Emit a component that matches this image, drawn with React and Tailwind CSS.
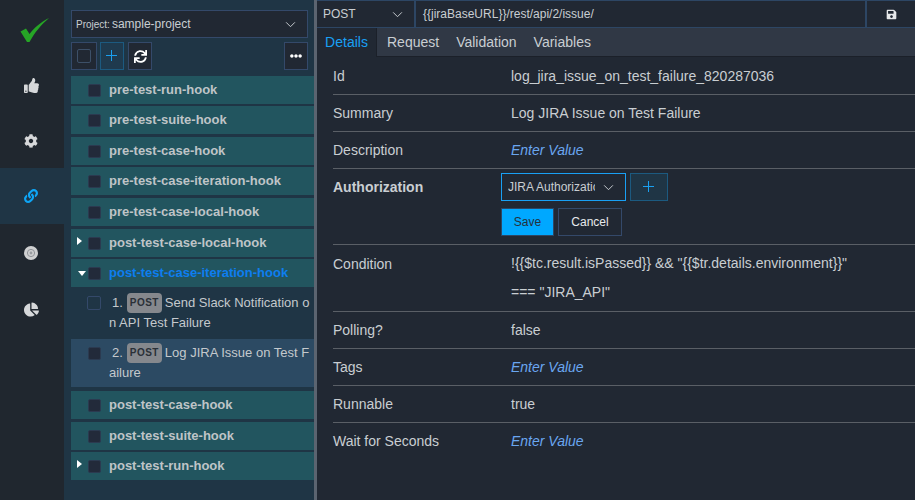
import React from "react";
import { FaThumbsUp, FaCog, FaLink, FaChartPie, FaSync, FaEllipsisH, FaSave } from "react-icons/fa";

const Chevron = ({ className }) => (
  <svg viewBox="0 0 12 8" className={className} fill="none" stroke="currentColor" strokeWidth="1.1">
    <path d="M1 1.5 L6 6.5 L11 1.5" />
  </svg>
);

const Plus = () => (
  <svg viewBox="0 0 12 12" className="w-[12px] h-[12px]" stroke="currentColor" strokeWidth="1">
    <path d="M5.5 0V11M0 5.5H11" />
  </svg>
);

const Box = ({ outline }) => (
  <span className={`block rounded-[2px] shrink-0 border ${outline ? "w-[14px] h-[14px] -ml-[1px] border-[#34496a]" : "w-[13px] h-[13px] border-[#2b3a50] bg-[#222a3a]"}`} />
);

const Caret = ({ dir }) =>
  dir === "right" ? (
    <span className="absolute left-[6px] top-[8px] w-0 h-0 border-y-[4px] border-y-transparent border-l-[5px] border-l-white" />
  ) : (
    <span className="absolute left-[7px] top-[12px] w-0 h-0 border-x-[4px] border-x-transparent border-t-[5px] border-t-white" />
  );

const Hook = ({ label, caret, active, mb = "mb-[2px]" }) => (
  <div className={`relative h-[28px] ${mb} bg-[#22555f] flex items-center pl-[17px] shrink-0`}>
    {caret && <Caret dir={caret} />}
    <Box />
    <span className={`ml-[8px] font-bold text-[13px] ${active ? "text-[#0d7ef0]" : "text-[#bfc4c7]"}`}>{label}</span>
  </div>
);

const Child = ({ n, l1, l2, selected, h, boxTop, textTop }) => (
  <div className={`flex pl-[17px] shrink-0 ${h} ${selected ? "bg-[#2c4a63]" : ""}`}>
    <span className={boxTop}><Box outline={!selected} /></span>
    <div className={`ml-[8px] text-[13px] leading-[20px] text-[#c4c9cd] whitespace-nowrap ${textTop}`}>
      <div className="flex items-center h-[20px]">
        <span className="ml-[3px]">{n}.</span>
        <span className="ml-[4px] mr-[3px] w-[35px] h-[20px] rounded-[4px] bg-[#85888d] text-[#2a3038] text-[10px] font-bold tracking-[0.5px] flex items-center justify-center">POST</span>
        <span>{l1}</span>
      </div>
      <div>{l2}</div>
    </div>
  </div>
);

const NavItem = ({ children, active }) => (
  <div className={`h-[56px] flex items-center justify-center pr-[2px] ${active ? "bg-[#1f3545] text-[#0ea5f5]" : "text-[#d6d8da]"}`}>{children}</div>
);

const Row = ({ label, value, placeholder, border = true }) => (
  <div className={`flex items-center h-[37px] ${border ? "border-b border-[#5a5f66]" : ""}`}>
    <div className="w-[178px] shrink-0">{label}</div>
    {placeholder ? <div className="italic text-[#6aa6f0]">Enter Value</div> : <div>{value}</div>}
  </div>
);

const ToolBtn = ({ className = "", children }) => (
  <div className={`h-[28px] flex items-center justify-center border shrink-0 ${className}`}>{children}</div>
);

export default function App() {
  return (
    <div className="w-[915px] h-[500px] overflow-hidden flex bg-[#212833] text-[14px] text-[#c9ced2]" style={{ fontFamily: '"Liberation Sans", Arial, sans-serif' }}>
      <aside className="w-[64px] shrink-0 bg-[#20272f] flex flex-col">
        <div className="h-[56px] flex items-center justify-center">
          <svg viewBox="0 0 30 24" className="w-[30px] h-[24px] mt-[4px] ml-[5px]">
            <path d="M0.5 13.5 L6 10.5 L9.5 16 C14 10 21 4 29 0 C21 7 15 14 9.5 24 L7 24 Z" fill="#26a526" />
          </svg>
        </div>
        <NavItem><span className="mt-[2px]"><FaThumbsUp size={15} /></span></NavItem>
        <NavItem><span className="mt-[2px]"><FaCog size={14} /></span></NavItem>
        <NavItem active><FaLink size={14} /></NavItem>
        <NavItem>
          <svg viewBox="0 0 14 14" className="w-[14px] h-[14px] mt-[2px]">
            <circle cx="7" cy="7" r="7" fill="#cfd0d1" />
            <circle cx="7" cy="7" r="3.6" fill="none" stroke="#8f9297" strokeWidth="1" />
            <circle cx="7" cy="7" r="1.4" fill="#9a9da1" />
          </svg>
        </NavItem>
        <NavItem><span className="mt-[2px]"><FaChartPie size={15} /></span></NavItem>
      </aside>

      <section className="w-[250px] shrink-0 bg-[#1f3545] pt-[10px] pl-[7px] flex flex-col">
        <div className="w-[237px] h-[28px] bg-[#212833] border border-[#34496a] flex items-center pl-[4px] pr-[11px] text-[#c9ced2]">
          <span className="text-[10px]">Project:</span>
          <span className="ml-[2px] text-[12px]">sample-project</span>
          <Chevron className="w-[11px] h-[7px] ml-auto" />
        </div>
        <div className="flex mt-[4px] mb-[6px] w-[237px]">
          <ToolBtn className="w-[26px] border-[#34496a] bg-[#212833]"><span className="block w-[14px] h-[14px] rounded-[2px] border border-[#3d5068]" /></ToolBtn>
          <ToolBtn className="w-[24px] ml-[3px] border-[#1c5a80] bg-[#1f3a4e] text-[#1aa0f0]"><Plus /></ToolBtn>
          <ToolBtn className="w-[24px] ml-[4px] border-[#34496a] bg-[#212833] text-white"><FaSync size={13} /></ToolBtn>
          <ToolBtn className="w-[24px] ml-auto border-[#34496a] bg-[#212833] text-white"><FaEllipsisH size={12} /></ToolBtn>
        </div>
        <Hook label="pre-test-run-hook" mb="mb-[2px]" />
        <Hook label="pre-test-suite-hook" mb="mb-[3px]" />
        <Hook label="pre-test-case-hook" mb="mb-[2px]" />
        <Hook label="pre-test-case-iteration-hook" mb="mb-[3px]" />
        <Hook label="pre-test-case-local-hook" mb="mb-[3px]" />
        <Hook label="post-test-case-local-hook" caret="right" mb="mb-[2px]" />
        <Hook label="post-test-case-iteration-hook" caret="down" active mb="mb-0" />
        <Child n={1} l1="Send Slack Notification o" l2="n API Test Failure" h="h-[52px]" boxTop="mt-[9px]" textTop="pt-[6px]" />
        <Child n={2} l1="Log JIRA Issue on Test F" l2="ailure" selected h="h-[48px] mb-[4px]" boxTop="mt-[8px]" textTop="pt-[4px]" />
        <Hook label="post-test-case-hook" mb="mb-[3px]" />
        <Hook label="post-test-suite-hook" mb="mb-[2px]" />
        <Hook label="post-test-run-hook" caret="right" />
      </section>

      <div className="w-[3px] shrink-0 bg-[#5b6470]" />

      <main className="flex-1 min-w-0 flex flex-col">
        <div className="h-[28px] shrink-0 flex bg-[#212833] border-y border-[#2d4664] text-[12px]">
          <div className="w-[99px] flex items-center pl-[6px] pr-[11px] border-r-2 border-[#2d4664]">
            <span>POST</span>
            <Chevron className="w-[11px] h-[7px] ml-auto" />
          </div>
          <div className="flex-1 flex items-center pl-[7px]">{"{{jiraBaseURL}}/rest/api/2/issue/"}</div>
          <div className="w-[50px] flex items-center justify-center border-l-2 border-[#2d4664] text-[#e6e8ea]"><FaSave size={11} /></div>
        </div>
        <div className="h-[29px] shrink-0 flex items-center bg-[#303845] border-b border-[#1b2029]">
          <div className="h-[29px] w-[60px] flex items-center justify-center bg-[#212833] border-r border-[#1b2029] text-[#19a0f5]">Details</div>
          <span className="ml-[10px]">Request</span>
          <span className="ml-[17px]">Validation</span>
          <span className="ml-[17px]">Variables</span>
        </div>
        <div className="pl-[16px] pt-[1px]">
          <Row label="Id" value="log_jira_issue_on_test_failure_820287036" />
          <Row label="Summary" value="Log JIRA Issue on Test Failure" />
          <Row label="Description" placeholder />
          <div className="flex h-[76px] border-b border-[#5a5f66]">
            <div className="w-[168px] shrink-0 font-bold pt-[8px]">Authorization</div>
            <div className="pt-[4px]">
              <div className="flex">
                <div className="w-[125px] h-[28px] border border-[#19a0f5] flex items-center pl-[6px] pr-[11px] text-[12px]">
                  <span className="w-[87px] overflow-hidden whitespace-nowrap">JIRA Authorization</span>
                  <Chevron className="w-[11px] h-[7px] ml-auto" />
                </div>
                <div className="w-[38px] h-[28px] ml-[4px] border border-[#1c5a80] bg-[#1f3545] text-[#1aa0f0] flex items-center justify-center"><Plus /></div>
              </div>
              <div className="flex mt-[7px] text-[12px]">
                <div className="w-[53px] h-[28px] bg-[#00a8ff] border border-[#2d4664] text-[#24303c] flex items-center justify-center">Save</div>
                <div className="w-[64px] h-[28px] ml-[4px] border border-[#34496a] text-[#e8eaec] flex items-center justify-center">Cancel</div>
              </div>
            </div>
          </div>
          <div className="flex h-[67px] border-b border-[#5a5f66]">
            <div className="w-[178px] shrink-0 pt-[9px]">Condition</div>
            <div className="leading-[29px] pt-[4px] whitespace-nowrap">
              <div>{'!{{$tc.result.isPassed}} && "{{$tr.details.environment}}"'}</div>
              <div>{'=== "JIRA_API"'}</div>
            </div>
          </div>
          <Row label="Polling?" value="false" />
          <Row label="Tags" placeholder />
          <Row label="Runnable" value="true" />
          <Row label="Wait for Seconds" placeholder border={false} />
        </div>
      </main>
    </div>
  );
}
